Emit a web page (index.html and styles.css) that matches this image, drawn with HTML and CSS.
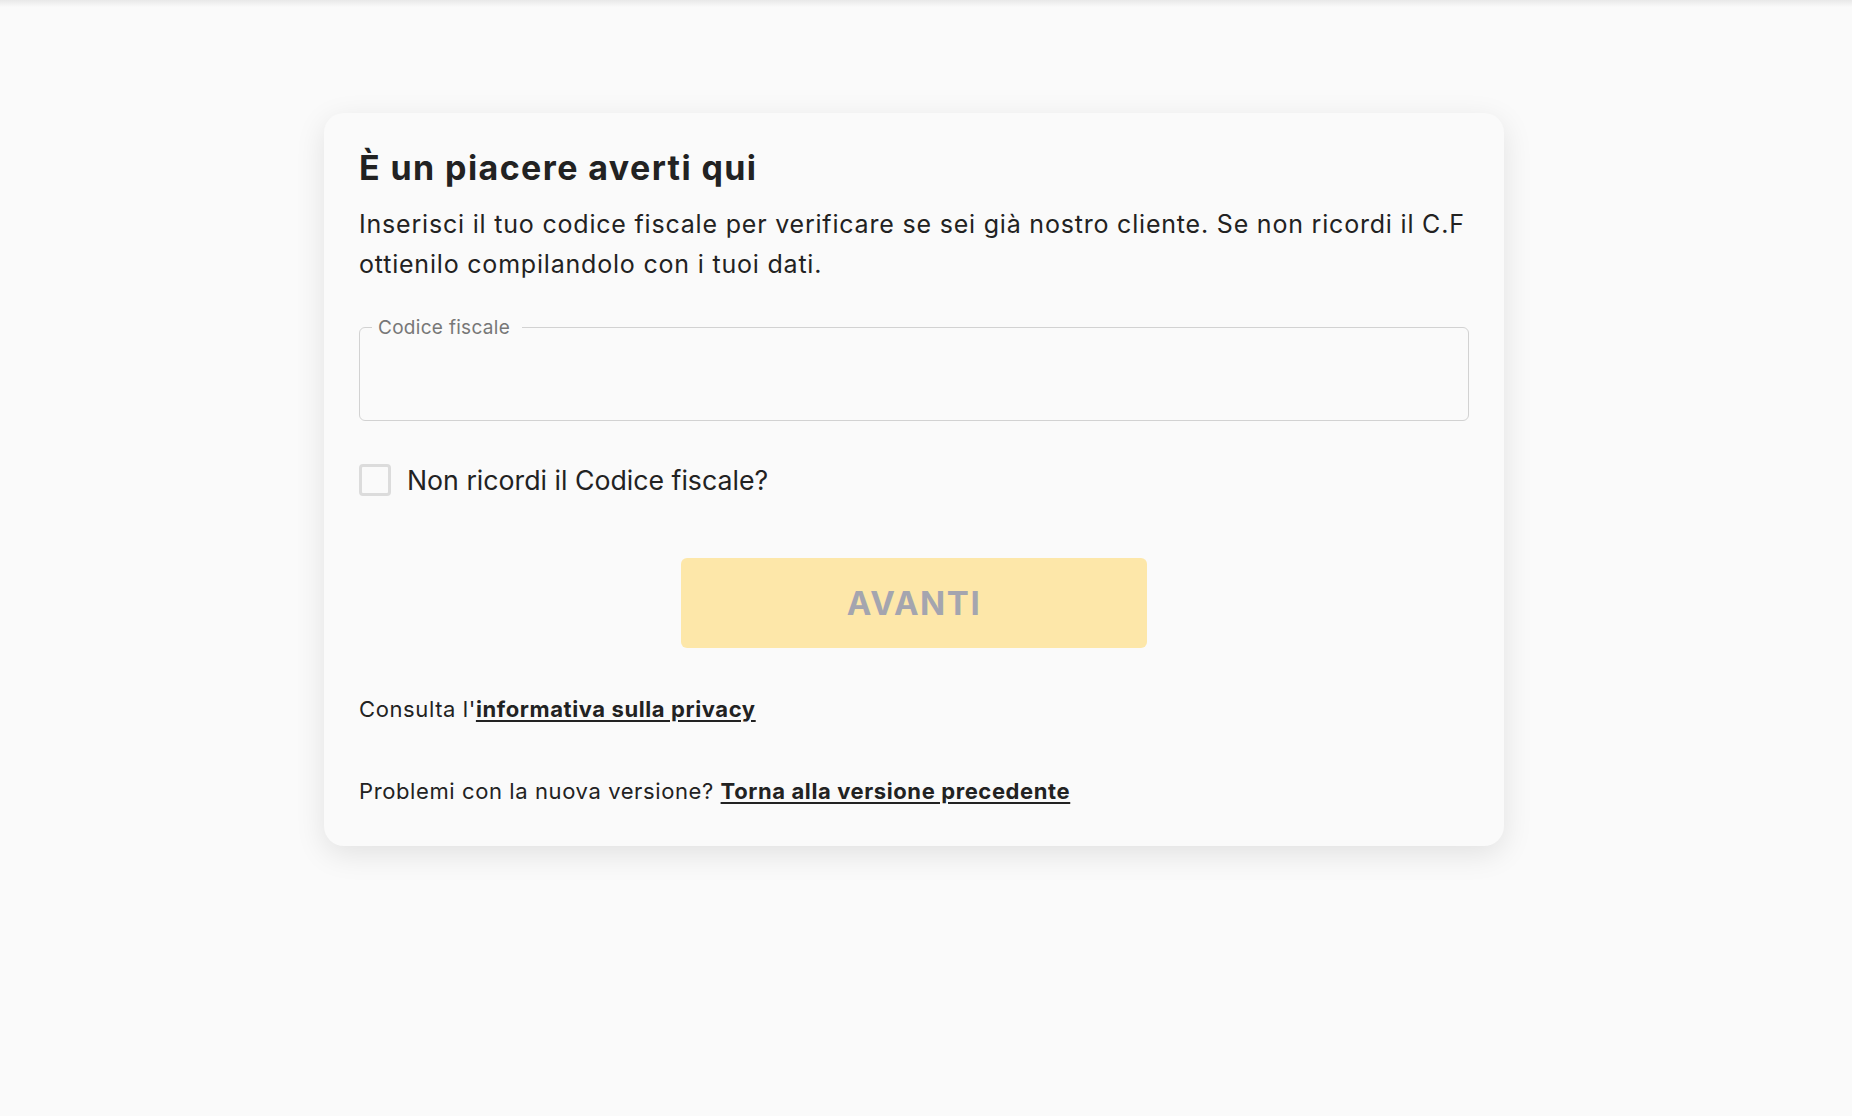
FILE: index.html
```html
<!DOCTYPE html>
<html lang="it">
<head>
<meta charset="utf-8">
<title>Verifica cliente</title>
<link rel="stylesheet" href="styles.css">
</head>
<body>
<div class="topbar"></div>
<main class="page">
  <section class="card">
    <h1 class="title">È un piacere averti qui</h1>
    <p class="intro">Inserisci il tuo codice fiscale per verificare se sei già nostro cliente. Se non ricordi il C.F ottienilo compilandolo con i tuoi dati.</p>
    <fieldset class="field">
      <legend class="field-label">Codice fiscale</legend>
      <input class="field-input" type="text" aria-label="Codice fiscale">
    </fieldset>
    <label class="check-row">
      <span class="check-box"></span>
      <span class="check-text">Non ricordi il Codice fiscale?</span>
    </label>
    <div class="actions">
      <button class="btn-next" type="button" disabled>AVANTI</button>
    </div>
    <p class="note">Consulta l'<a href="#" class="link">informativa sulla privacy</a></p>
    <p class="note note-last">Problemi con la nuova versione? <a href="#" class="link">Torna alla versione precedente</a></p>
  </section>
</main>
</body>
</html>
```

FILE: styles.css
```css
html, body {
  margin: 0;
  padding: 0;
  background: #fafafa;
}
body {
  font-family: Inter, "Noto Sans", sans-serif;
  color: #222;
  min-height: 1116px;
}
.topbar {
  height: 7px;
  background: linear-gradient(#e8e8e8, #fafafa);
}
.page {
  display: flex;
  justify-content: center;
  padding: 106px 24px 0 0;
}
.card {
  width: 1180px;
  box-sizing: border-box;
  background: #fafafa;
  border-radius: 20px;
  box-shadow: 0 8px 30px rgba(0, 0, 0, 0.1);
  padding: 35px 35px 40px 35px;
}
.title {
  margin: 0;
  font-size: 34px;
  line-height: 40px;
  font-weight: 700;
  letter-spacing: 1.4px;
  color: #222;
}
.intro {
  margin: 16px 0 0;
  font-size: 25px;
  line-height: 40px;
  letter-spacing: 0.8px;
  color: #222;
}
.field {
  margin: 32px 0 0;
  padding: 0 12px 0 12px;
  border: 1.5px solid #d2d2d2;
  border-radius: 6px;
  height: 105px;
  box-sizing: border-box;
}
.field-label {
  padding: 0 12px 0 6px;
  font-size: 19px;
  line-height: 23px;
  letter-spacing: 0.3px;
  color: #777;
}
.field-input {
  display: block;
  width: 100%;
  border: 0;
  background: transparent;
  outline: none;
  height: 60px;
  font: inherit;
}
.check-row {
  display: flex;
  align-items: center;
  gap: 16px;
  margin-top: 43px;
}
.check-box {
  width: 32px;
  height: 32px;
  box-sizing: border-box;
  border: 3px solid #dcdcdc;
  border-radius: 4px;
  flex: none;
}
.check-text {
  font-size: 26.7px;
  line-height: 32px;
  color: #222;
}
.actions {
  display: flex;
  justify-content: center;
  margin-top: 62px;
}
.btn-next {
  width: 466px;
  height: 90px;
  border: 0;
  border-radius: 6px;
  background: #fde7a9;
  color: #a4a5af;
  font-family: Inter, "Noto Sans", sans-serif;
  font-weight: 700;
  font-size: 33px;
  letter-spacing: 1.6px;
}
.note {
  margin: 46px 0 0;
  font-size: 22px;
  line-height: 30px;
  letter-spacing: 0.6px;
  color: #222;
}
.note-last {
  margin-top: 52px;
}
.link {
  color: #222;
  font-weight: 700;
  text-decoration: underline;
  text-underline-offset: 3px;
}
```
